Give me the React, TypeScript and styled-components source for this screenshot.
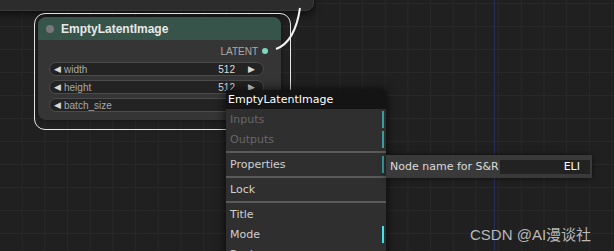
import styled, { createGlobalStyle } from "styled-components";

const Global = createGlobalStyle`
    html, body {
        margin: 0;
        padding: 0;
        background: #202020;
    }
`

const Canvas = styled.div`
    position: relative;
    width: 614px;
    height: 251px;
    overflow: hidden;
    background-color: #202020;
    background-image:
        linear-gradient(to right, #282828 1px, transparent 1px),
        linear-gradient(to bottom, #282828 1px, transparent 1px);
    background-size: 22.7px 23px;
    background-position: -1px 3px;
    font-family: "Liberation Sans", Arial, sans-serif;
`

const GuideLine = styled.div`
    position: absolute;
    left: 494px;
    top: 0;
    width: 1px;
    height: 100%;
    background: #26305a;
`

const PrevNode = styled.div`
    position: absolute;
    left: -12px;
    top: -30px;
    width: 324px;
    height: 39px;
    background: #2c2c2c;
    border: 1px solid #3a3a3a;
    border-radius: 8px;
    box-shadow: 0 2px 8px rgba(0, 0, 0, 0.7);
`

const Selection = styled.div`
    position: absolute;
    left: 34px;
    top: 13px;
    width: 249px;
    height: 109px;
    border: 1px solid #e6e6e6;
    border-radius: 11px;
    padding: 3px;
    box-sizing: content-box;
`

const Node = styled.div`
    width: 243px;
    height: 103px;
    background: #353535;
    border-radius: 8px;
    overflow: hidden;
    box-shadow: 0 0 4px rgba(0, 0, 0, 0.5);
`

const TitleBar = styled.div`
    height: 23px;
    display: flex;
    align-items: center;
    gap: 7px;
    padding-left: 8px;
    background: #37544a;
    color: #e8e8e8;
    font-size: 12px;
    font-weight: bold;
`

const Dot = styled.span<{ $color: string; $size: number }>`
    width: ${(p) => p.$size}px;
    height: ${(p) => p.$size}px;
    border-radius: 50%;
    background: ${(p) => p.$color};
    flex: none;
`

const Body = styled.div`
    display: flex;
    flex-direction: column;
    padding: 4px 17px 0 11px;
    gap: 4px;
`

const OutputRow = styled.div`
    height: 14px;
    display: flex;
    justify-content: flex-end;
    align-items: center;
    gap: 4px;
    margin-right: -4px;
    color: #aaa;
    font-size: 10px;
`

const Widget = styled.div`
    height: 12px;
    display: flex;
    align-items: center;
    border: 1px solid #4b4b4b;
    border-radius: 7px;
    background: #232323;
    padding: 0 5px 0 4px;
    font-size: 10px;
    color: #a8a8a8;
`

const Arrow = styled.span`
    color: #d8d8d8;
    font-size: 9px;
    margin-right: 3px;
`

const Value = styled.span`
    margin-left: auto;
    margin-right: 13px;
    color: #dcdcdc;
`

const Wire = styled.svg`
    position: absolute;
    left: 0;
    top: 0;
    pointer-events: none;
`

const Menu = styled.div`
    position: absolute;
    left: 226px;
    top: 90px;
    width: 160px;
    height: 175px;
    background: #2f2f2f;
    box-shadow: 0 0 10px rgba(0, 0, 0, 0.8);
    font-family: "DejaVu Sans", Verdana, sans-serif;
    font-size: 11px;
`

const MenuTitle = styled.div`
    height: 19px;
    display: flex;
    align-items: center;
    padding-left: 2px;
    background: #141414;
    color: #fff;
    font-size: 11px;
`

const Item = styled.div<{ $disabled?: boolean }>`
    height: 20px;
    display: flex;
    align-items: center;
    justify-content: space-between;
    padding: 0 2px 0 4px;
    color: ${(p) => (p.$disabled ? "#686868" : "#cfcfcf")};
`

const Bar = styled.span<{ $bright?: boolean }>`
    width: 2px;
    height: 17px;
    background: ${(p) => (p.$bright ? "#3fe3ea" : "#3a9c9c")};
`

const Separator = styled.div`
    height: 5px;
    display: flex;
    align-items: center;

    &::after {
        content: "";
        flex: 1;
        height: 2px;
        background: #5a5a5a;
    }
`

const SubMenu = styled.div`
    position: absolute;
    left: 386px;
    top: 155px;
    width: 200px;
    height: 19px;
    display: flex;
    align-items: center;
    justify-content: space-between;
    padding: 2px 2px 2px 4px;
    background: #3a3a3a;
    box-shadow: 0 0 6px rgba(0, 0, 0, 0.6);
    font-family: "DejaVu Sans", Verdana, sans-serif;
    font-size: 11px;
    color: #dcdcdc;
`

const NameInput = styled.div`
    width: 80px;
    height: 14px;
    display: flex;
    align-items: center;
    justify-content: flex-end;
    padding-right: 10px;
    background: #222;
    color: #fff;
`

const Watermark = styled.div`
    position: absolute;
    left: 470px;
    top: 223px;
    font-family: "Liberation Sans", "Noto Sans CJK SC", sans-serif;
    font-size: 15px;
    color: rgba(215, 215, 215, 0.85);
    white-space: nowrap;
`

const widgets = [
    { label: "width", value: "512" },
    { label: "height", value: "512" },
    { label: "batch_size", value: "1" },
]

export default function App() {
    return (
        <Canvas>
            <Global />
            <GuideLine />
            <PrevNode />
            <Selection>
                <Node>
                    <TitleBar>
                        <Dot $color="#777" $size={8} />
                        EmptyLatentImage
                    </TitleBar>
                    <Body>
                        <OutputRow>
                            LATENT
                            <Dot $color="#7fd6c2" $size={6} />
                        </OutputRow>
                        {widgets.map((w) => (
                            <Widget key={w.label}>
                                <Arrow>◀</Arrow>
                                {w.label}
                                <Value>{w.value}</Value>
                                <Arrow>▶</Arrow>
                            </Widget>
                        ))}
                    </Body>
                </Node>
            </Selection>
            <Wire width="614" height="251">
                <path d="M276 49 C 290 44, 297 28, 300 8" stroke="#f2f2f2" strokeWidth="2" fill="none" />
            </Wire>
            <Menu>
                <MenuTitle>EmptyLatentImage</MenuTitle>
                <Item $disabled>Inputs<Bar /></Item>
                <Item $disabled>Outputs<Bar /></Item>
                <Separator />
                <Item>Properties<Bar /></Item>
                <Separator />
                <Item>Lock</Item>
                <Separator />
                <Item>Title</Item>
                <Item>Mode<Bar $bright /></Item>
                <Item>Resize</Item>
            </Menu>
            <SubMenu>
                Node name for S&amp;R
                <NameInput>ELI</NameInput>
            </SubMenu>
            <Watermark>CSDN @AI漫谈社</Watermark>
        </Canvas>
    )
}
